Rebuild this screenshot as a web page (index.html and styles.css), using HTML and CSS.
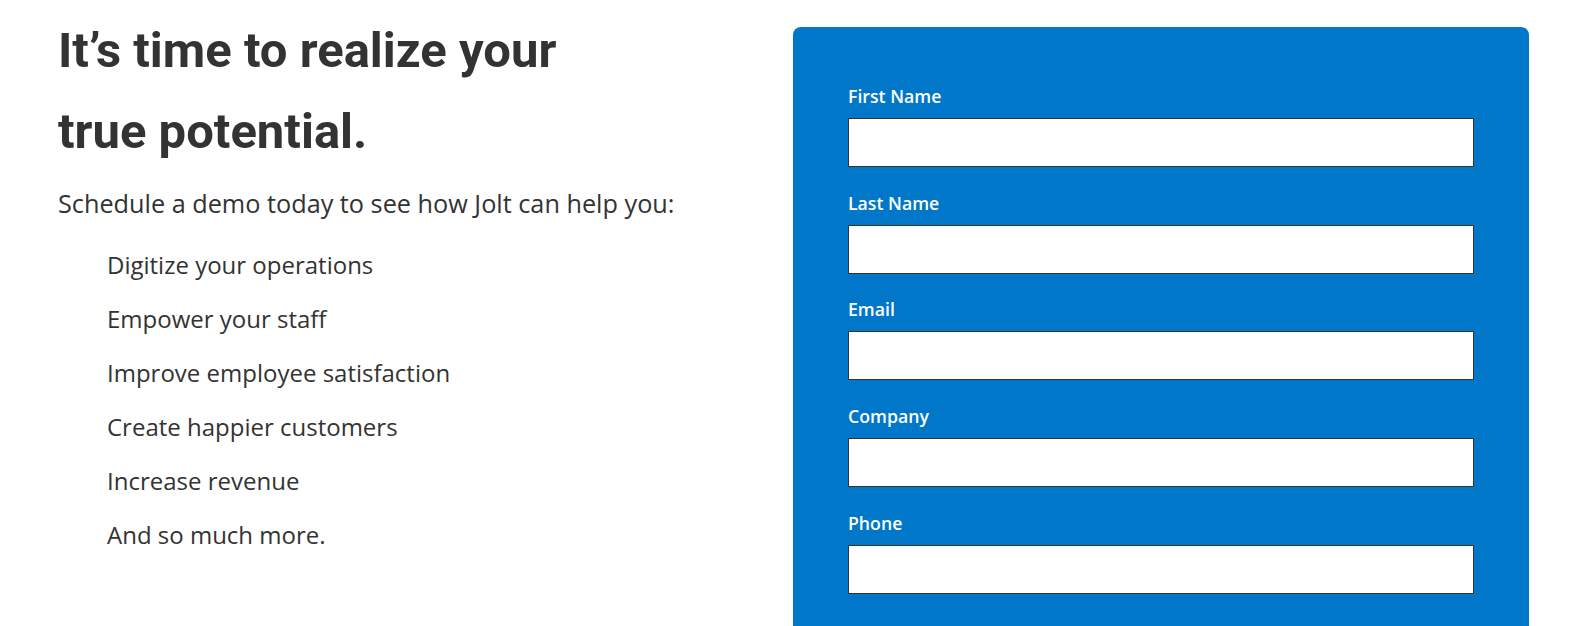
FILE: index.html
```html
<!DOCTYPE html>
<html lang="en">
  <head>
    <meta charset="UTF-8" />
    <meta name="viewport" content="width=device-width, initial-scale=1.0" />
    <title>Schedule a Demo</title>
    <link rel="stylesheet" href="styles.css">
  </head>
  <body>
    <div class="container">
      <div class="intro">
        <h1>It’s time to realize your true potential.</h1>
        <p class="lead">Schedule a demo today to see how Jolt can help you:</p>
        <ul class="benefits">
          <li>Digitize your operations</li>
          <li>Empower your staff</li>
          <li>Improve employee satisfaction</li>
          <li>Create happier customers</li>
          <li>Increase revenue</li>
          <li>And so much more.</li>
        </ul>
      </div>

      <form class="demo-form">
        <div class="field">
          <label for="firstName">First Name</label>
          <input type="text" id="firstName" />
        </div>
        <div class="field">
          <label for="lastName">Last Name</label>
          <input type="text" id="lastName" />
        </div>
        <div class="field">
          <label for="email">Email</label>
          <input type="email" id="email" />
        </div>
        <div class="field">
          <label for="company">Company</label>
          <input type="text" id="company" />
        </div>
        <div class="field">
          <label for="phone">Phone</label>
          <input type="tel" id="phone" />
        </div>
      </form>
    </div>
  </body>
</html>
```

FILE: styles.css
```css
body {
  font-family: "Open Sans", "Liberation Sans", sans-serif;
  background-color: #ffffff;
  color: #333333;
  margin: 0;
  padding: 0;
  overflow: hidden;
}

.container {
  display: grid;
  grid-template-columns: 1fr 736px;
  padding: 27px 42px 0 58px;
}

.intro h1 {
  font-family: "Roboto", sans-serif;
  font-size: 49px;
  font-weight: 700;
  line-height: 81px;
  width: 520px;
  margin: -17px 0 0 0;
}

.lead {
  font-size: 25.25px;
  line-height: 34px;
  margin: 14px 0 0 0;
}

.benefits {
  list-style: none;
  margin: 30px 0 0 0;
  padding-left: 49px;
}

.benefits li {
  font-size: 24px;
  line-height: 30px;
  margin-bottom: 24px;
}

.demo-form {
  display: flex;
  flex-direction: column;
  gap: 23.7px;
  background-color: #0077c8;
  border-radius: 8px 8px 0 0;
  padding: 57px 55px 40px 55px;
  min-height: 620px;
}

.field {
  display: flex;
  flex-direction: column;
  gap: 10px;
}

.field label {
  height: 24px;
  color: #ffffff;
  font-size: 17.7px;
  font-weight: 600;
  line-height: 24px;
}

.field input {
  width: 100%;
  height: 49px;
  margin: 0;
  padding: 0;
  box-sizing: border-box;
  border: 1px solid #333333;
  border-radius: 0;
  background-color: #ffffff;
}
```
